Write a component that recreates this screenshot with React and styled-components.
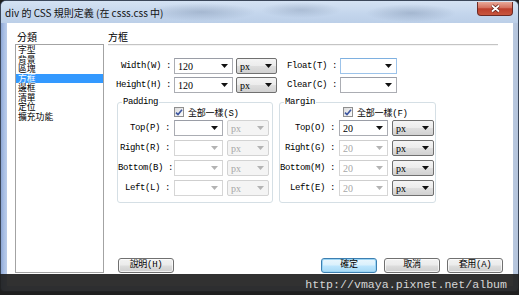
import React from "react";
import styled, { createGlobalStyle } from "styled-components";

const MONO = `"Liberation Mono", "Noto Sans CJK TC", monospace`;
const CJK = `"Noto Sans CJK TC", "Noto Sans", sans-serif`;

const GlobalStyle = createGlobalStyle`
  html, body {
    margin: 0;
    padding: 0;
    background: #1e1e1e;
  }
  body {
    width: 519px;
    height: 295px;
    overflow: hidden;
  }
`;

const Screen = styled.div`
  position: relative;
  width: 519px;
  height: 295px;
  overflow: hidden;
  background: #1e1e1e;
`;

const Window = styled.div`
  height: 292px;
  box-sizing: border-box;
  display: flex;
  flex-direction: column;
  border: 1px solid #3b475a;
  border-radius: 6px 6px 4px 4px;
  background: linear-gradient(90deg, #8ea8d6 0, #a9bfe5 3px, #c6d5ec 8px, #c9d7ea 95%, #b4c4dc 100%);
`;

const TitleBar = styled.div`
  height: 22px;
  display: flex;
  align-items: flex-start;
  padding-left: 4px;
  border-radius: 5px 5px 0 0;
  background:
    radial-gradient(ellipse 55px 9px at 200px 11px, rgba(105, 125, 155, 0.35), transparent),
    radial-gradient(ellipse 40px 8px at 300px 9px, rgba(105, 125, 155, 0.3), transparent),
    radial-gradient(ellipse 45px 9px at 410px 12px, rgba(105, 125, 155, 0.35), transparent),
    linear-gradient(#d4e2f3, #c3d5ec 60%, #bccfe8);
`;

const Title = styled.span`
  font: 10px ${CJK};
  line-height: 23px;
  color: #111;
`;

const CloseButton = styled.div`
  margin: 1px 5px 0 auto;
  width: 36px;
  height: 14px;
  box-sizing: border-box;
  display: flex;
  align-items: center;
  justify-content: center;
  border: 1px solid #6e2a24;
  border-top: none;
  border-radius: 0 0 4px 4px;
  background: linear-gradient(#e8a898, #d4705e 45%, #bd3f2c 52%, #c9573f);
`;

const Client = styled.div`
  flex: 1;
  margin: 0 5px 5px 6px;
  padding: 8px 10px 13px 8px;
  display: flex;
  gap: 4px;
  background: #fff;
`;

const SideColumn = styled.div`
  width: 89px;
  display: flex;
  flex-direction: column;
`;

const Caption = styled.div`
  height: 13px;
  padding-left: ${(p) => p.$indent || 0}px;
  font: 10px ${CJK};
  line-height: 12px;
  color: #000;
`;

const ListBox = styled.div`
  flex: 1;
  border: 1px solid #a3a3a3;
  overflow: hidden;
`;

const ListItem = styled.div`
  height: 9.5px;
  padding-left: 2px;
  font: 8.8px ${CJK};
  line-height: 9.5px;
  color: ${(p) => (p.$selected ? "#fff" : "#000")};
  background: ${(p) => (p.$selected ? "#3399ff" : "transparent")};
`;

const MainColumn = styled.div`
  flex: 1;
  display: flex;
  flex-direction: column;
`;

const Separator = styled.div`
  height: 1px;
  margin-right: 5px;
  background: #c4c4c4;
  box-shadow: 0 1px 0 #f4f4f4;
`;

const TopGrid = styled.div`
  display: grid;
  grid-template-columns: 63px 59px 41px 57px 57px;
  grid-auto-rows: 16px;
  column-gap: 3px;
  row-gap: 3px;
  margin-top: 13px;
`;

const Label = styled.span`
  font: 9px ${MONO};
  letter-spacing: -0.4px;
  line-height: 16px;
  text-align: right;
  white-space: pre;
  color: #000;
`;

const Combo = styled.div`
  height: 16px;
  box-sizing: border-box;
  display: flex;
  align-items: center;
  padding-left: 3px;
  border: 1px solid
    ${(p) => (p.$hot ? "#9cc3ea" : p.$disabled ? "#d6d6d6" : "#abadb3")};
  border-top-color: ${(p) => (p.$hot ? "#7eb0e0" : p.$disabled ? "#cfcfcf" : "#9a9da6")};
  background: #fff;
  font: 10px "Liberation Serif", serif;
  color: ${(p) => (p.$disabled ? "#a8a8a8" : "#000")};
`;

const UnitSelect = styled(Combo)`
  border: 1px solid ${(p) => (p.$disabled ? "#d3d3d3" : "#707070")};
  border-radius: 2px;
  background: ${(p) =>
    p.$disabled
      ? "#f4f4f4"
      : "linear-gradient(#f4f4f4, #ececec 48%, #dedede 52%, #d1d1d1)"};
`;

const Value = styled.span`
  flex: 1;
`;

const ArrowIcon = styled.svg`
  width: 7px;
  height: 4px;
  margin-right: 4px;
  fill: ${(p) => (p.$muted ? "#b4b4b4" : "#111")};
`;

const GroupRow = styled.div`
  display: flex;
  gap: 6px;
  margin: 4px 0 0 9px;
`;

const Group = styled.fieldset`
  margin: 0;
  width: ${(p) => p.$width}px;
  box-sizing: border-box;
  min-inline-size: 0;
  padding: 0 2px 6px 0;
  border: 1px solid #d5dfe5;
  border-radius: 3px;
`;

const Legend = styled.legend`
  margin-left: 4px;
  padding: 0 1px;
  font: 9px ${MONO};
  letter-spacing: -0.4px;
  line-height: 11px;
  color: #000;
`;

const GroupGrid = styled.div`
  display: grid;
  grid-template-columns: ${(p) => p.$label}px 49px 42px;
  grid-template-rows: 8px repeat(4, 16px);
  column-gap: 4px;
  row-gap: 4px;
`;

const CheckRow = styled.label`
  grid-column: 2 / 4;
  display: flex;
  align-items: center;
  gap: 4px;
  margin-left: ${(p) => p.$shift || 0}px;
  font: 9px ${MONO};
  letter-spacing: -0.2px;
  white-space: nowrap;
  color: #000;
`;

const CheckBox = styled.span`
  width: 10px;
  height: 10px;
  box-sizing: border-box;
  display: flex;
  align-items: center;
  justify-content: center;
  border: 1px solid #8f8f8f;
  background: linear-gradient(135deg, #dcdcdc, #fbfbfb);
`;

const Footer = styled.div`
  margin-top: auto;
  display: flex;
  gap: 7px;
  padding-left: 10px;
`;

const Button = styled.button`
  width: 56px;
  height: 15px;
  padding: 0;
  margin-left: ${(p) => (p.$push ? "auto" : "0")};
  border: 1px solid ${(p) => (p.$primary ? "#3c7fb1" : "#707070")};
  border-radius: 3px;
  background: ${(p) =>
    p.$primary
      ? "linear-gradient(#eaf6fd, #d9f0fc 48%, #bee6fd 52%, #a7d9f5)"
      : "linear-gradient(#f2f2f2, #ebebeb 48%, #dddddd 52%, #cfcfcf)"};
  box-shadow: inset 0 0 0 1px ${(p) => (p.$primary ? "#9ad4f4" : "rgba(255,255,255,0.7)")};
  font: 9px ${MONO};
  letter-spacing: -0.3px;
  line-height: 13px;
  color: #000;
`;

const Watermark = styled.div`
  position: absolute;
  left: 0;
  right: 0;
  top: 274px;
  bottom: 0;
  display: flex;
  align-items: center;
  justify-content: flex-end;
  padding-right: 12px;
  background: rgba(32, 32, 32, 0.92);
  font: 11.6px "Liberation Mono", monospace;
  color: #d6d6d6;
`;

function Arrow({ muted }) {
  return (
    <ArrowIcon viewBox="0 0 7 4" $muted={muted}>
      <path d="M0 0h7L3.5 4z" />
    </ArrowIcon>
  );
}

function Field({ value, disabled, hot }) {
  return (
    <Combo $disabled={disabled} $hot={hot}>
      <Value>{value}</Value>
      <Arrow muted={disabled} />
    </Combo>
  );
}

function Unit({ disabled }) {
  return (
    <UnitSelect $disabled={disabled}>
      <Value>px</Value>
      <Arrow muted={disabled} />
    </UnitSelect>
  );
}

const categories = ["字型", "背景", "區塊", "方框", "邊框", "清單", "定位", "擴充功能"];

function SideGroup({ title, width, labelWidth, check, checkShift, rows, value, fieldsOff, unitsOff }) {
  return (
    <Group $width={width}>
      <Legend>{title}</Legend>
      <GroupGrid $label={labelWidth}>
        <CheckRow $shift={checkShift}>
          <CheckBox>
            <svg width="8" height="7" viewBox="0 0 8 7">
              <path d="M1 3.6 3 5.6 7 0.8" fill="none" stroke="#3b55a0" strokeWidth="1.6" />
            </svg>
          </CheckBox>
          全部一樣({check})
        </CheckRow>
        {rows.map((label, i) => (
          <React.Fragment key={label}>
            <Label>{label} :</Label>
            <Field value={value} disabled={i > 0 && fieldsOff} />
            <Unit disabled={unitsOff} />
          </React.Fragment>
        ))}
      </GroupGrid>
    </Group>
  );
}

export default function App() {
  return (
    <Screen>
      <GlobalStyle />
      <Window>
        <TitleBar>
          <Title>div 的 CSS 規則定義 (在 csss.css 中)</Title>
          <CloseButton>
            <svg width="11" height="9" viewBox="0 0 11 9">
              <path d="M2 1.5 9 7.5M9 1.5 2 7.5" stroke="#5a1a14" strokeWidth="3.2" />
              <path d="M2 1.5 9 7.5M9 1.5 2 7.5" stroke="#fff" strokeWidth="1.8" />
            </svg>
          </CloseButton>
        </TitleBar>
        <Client>
          <SideColumn>
            <Caption $indent={2}>分類</Caption>
            <ListBox>
              {categories.map((c) => (
                <ListItem key={c} $selected={c === "方框"}>
                  {c}
                </ListItem>
              ))}
            </ListBox>
          </SideColumn>
          <MainColumn>
            <Caption>方框</Caption>
            <Separator />
            <TopGrid>
              <Label>Width(W) :</Label>
              <Field value="120" />
              <Unit />
              <Label>Float(T) :</Label>
              <Field hot />
              <Label>Height(H) :</Label>
              <Field value="120" />
              <Unit />
              <Label>Clear(C) :</Label>
              <Field />
            </TopGrid>
            <GroupRow>
              <SideGroup
                title="Padding"
                width={156}
                labelWidth={52}
                check="S"
                rows={["Top(P)", "Right(R)", "Bottom(B)", "Left(L)"]}
                value=""
                fieldsOff
                unitsOff
              />
              <SideGroup
                title="Margin"
                width={157}
                labelWidth={55}
                check="F"
                checkShift={4}
                rows={["Top(O)", "Right(G)", "Bottom(M)", "Left(E)"]}
                value="20"
                fieldsOff
              />
            </GroupRow>
            <Footer>
              <Button>說明(H)</Button>
              <Button $primary $push>
                確定
              </Button>
              <Button>取消</Button>
              <Button>套用(A)</Button>
            </Footer>
          </MainColumn>
        </Client>
      </Window>
      <Watermark>http://vmaya.pixnet.net/album</Watermark>
    </Screen>
  );
}
